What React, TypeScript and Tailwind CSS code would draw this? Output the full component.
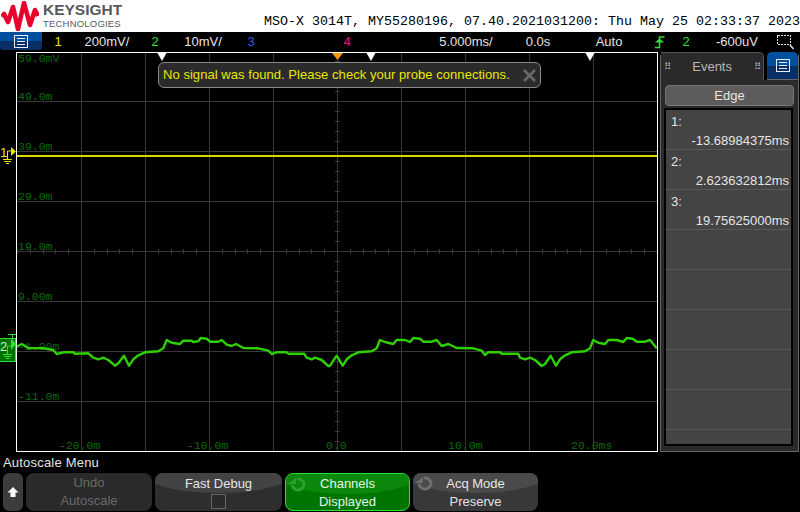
import React from "react";

const seg1: number[][] = [[50,80],[65,72],[85,84],[130,85],[160,90],[170,102],[190,97],[220,97],[225,101],[265,100],[280,113],[295,118],[310,113],[325,120],[345,137],[355,130],[372,107],[387,137],[400,118],[415,106],[435,97],[475,94],[490,85],[500,60],[515,68],[540,72],[550,62],[575,62],[580,66],[595,64],[602,54],[620,56],[630,65],[655,65],[665,60],[680,74],[695,78],[708,72],[730,84],[775,85],[805,92],[815,102],[830,97],[860,97],[865,101],[912,101],[920,113],[935,118],[945,113],[965,120],[985,138]];
const seg2: number[][] = [[0,137],[20,107],[38,137],[50,118],[65,106],[85,97],[125,94],[140,85],[150,60],[165,66],[190,72],[200,60],[225,60],[240,66],[250,54],[270,56],[280,65],[305,65],[320,60],[335,78],[355,72],[380,84],[430,85],[455,92],[465,105],[475,97],[510,97],[515,101],[565,101],[570,113],[585,118],[600,113],[615,120],[635,138],[645,132],[662,107],[678,137],[690,118],[705,106],[725,97],[765,94],[780,85],[790,60],[805,68],[825,72],[835,60],[860,60],[880,66],[890,54],[908,56],[920,65],[945,65],[960,60],[980,85]];
const trace = [
  ...seg1.map(([x, y]) => `${(x / 3).toFixed(1)},${(320 + y / 3).toFixed(1)}`),
  ...seg2.map(([x, y]) => `${(330 + x / 3).toFixed(1)},${(320 + y / 3).toFixed(1)}`),
].join(" ");

const vLines = [81, 145, 209, 273, 337, 401, 465, 529, 593];
const hLines = [101, 151, 201, 251, 301, 351, 401];
const vLabels: [string, number][] = [["59.0mV", 62], ["49.0m", 100], ["39.0m", 150], ["29.0m", 200], ["19.0m", 250], ["9.00m", 300], ["-1.00m", 350], ["-11.0m", 400]];
const hLabels: [string, number][] = [["-20.0m", 59], ["-10.0m", 187], ["0.0", 326], ["10.0m", 448], ["20.0ms", 571]];
const tri = [162, 371, 590];

function MenuIcon() {
  return (
    <svg width="14" height="13" viewBox="0 0 14 13" fill="none" stroke="#e8eef8" strokeWidth="1" shapeRendering="crispEdges">
      <rect x="0.5" y="0.5" width="13" height="12" />
      <path d="M3 3.5h8M3 6.5h8M3 9.5h8" />
    </svg>
  );
}

function Loop({ color }: { color: string }) {
  return (
    <svg className="absolute left-[2px] top-[3px]" width="19" height="15" viewBox="0 0 19 15" fill="none" stroke={color} strokeWidth="3">
      <path d="M9 2 A6 5.5 0 1 1 4 8" />
      <path d="M0 7 L8 7 L8 1 Z" fill={color} stroke="none" />
    </svg>
  );
}

function Scope() {
  return (
    <svg className="block" width="640" height="398" viewBox="17 53 640 398">
      <g stroke="#383838" strokeWidth="1" shapeRendering="crispEdges">
        {vLines.map((x) => <line key={x} x1={x + 0.5} x2={x + 0.5} y1="53" y2="451" />)}
        {hLines.map((y) => <line key={y} x1="17" x2="657" y1={y + 0.5} y2={y + 0.5} />)}
        {Array.from({ length: 40 }, (_, i) => (
          <line key={`v${i}`} x1="335" x2="340" y1={61 + i * 10 + 0.5} y2={61 + i * 10 + 0.5} />
        ))}
        {Array.from({ length: 50 }, (_, i) => (
          <line key={`h${i}`} x1={17 + i * 12.8 + 0.5} x2={17 + i * 12.8 + 0.5} y1="249" y2="254" />
        ))}
      </g>
      <g fill="#0b6b0b" className="font-['Liberation_Mono',monospace] text-[11.5px]">
        {vLabels.map(([t, y]) => <text key={t} x="18" y={y}>{t}</text>)}
        {hLabels.map(([t, x]) => <text key={t} x={x} y="449">{t}</text>)}
      </g>
      <rect x="17" y="155" width="640" height="2" fill="#d9d900" />
      <polyline points={trace} fill="none" stroke="#2fd000" strokeWidth="2.4" strokeLinejoin="round" />
      {tri.map((x) => <path key={x} d={`M${x - 4.5} 53h9l-4.5 8z`} fill="#ffffff" />)}
      <path d="M332 53h11l-5.5 7z" fill="#f59a10" />
    </svg>
  );
}

function Softkey({ className, top, children, w }: { className: string; top: string; children: React.ReactNode; w: string }) {
  return (
    <div className={`relative overflow-hidden rounded-lg h-[38px] ${w} ${className}`}>
      <div className={`absolute left-[-10%] right-[-10%] top-[-22px] h-[42px] rounded-[50%] ${top}`} />
      {children}
    </div>
  );
}

export default function App() {
  return (
    <div className="w-[800px] h-[512px] bg-black overflow-hidden flex flex-col font-['Liberation_Sans',Arial,sans-serif] text-[13px]">
      {/* Header */}
      <div className="h-8 bg-white flex items-start relative shrink-0">
        <svg className="mt-px ml-px shrink-0" width="38" height="30" viewBox="0 0 38 30" fill="none">
          <polyline points="1,16 3,13 7,21 12,6 17,28 23,2 29,24 34,9 37,15" stroke="#e8002d" strokeWidth="4.6" strokeLinejoin="round" />
        </svg>
        <div className="ml-[4px] flex flex-col">
          <span className="text-[15.5px] leading-[15px] mt-[2px] font-bold text-[#58595b] tracking-[0px]">KEYSIGHT</span>
          <span className="text-[9.5px] leading-[10px] mt-[2px] text-[#58595b] tracking-[0.2px]">TECHNOLOGIES</span>
        </div>
        <div className="ml-auto self-end pb-[2px] font-['Liberation_Mono',monospace] text-[13.33px] leading-[16px] text-black whitespace-pre">
          MSO-X 3014T, MY55280196, 07.40.2021031200: Thu May 25 02:33:37 2023
        </div>
      </div>

      {/* Status bar */}
      <div className="h-5 flex items-center shrink-0 text-[#e4e4e4] text-center leading-[18px]">
        <div className="w-[42px] h-[18px] self-start rounded-b-[3px] flex items-center justify-center bg-[linear-gradient(#00509f_0%,#00509f_50%,#0a2f66_50%,#0a2f66_100%)]">
          <MenuIcon />
        </div>
        <span className="ml-[6px] w-[20px] text-[#e6e600]">1</span>
        <span className="ml-[14px] w-[50px]">200mV/</span>
        <span className="ml-[13px] w-[20px] text-[#30e030]">2</span>
        <span className="ml-[13px] w-[50px]">10mV/</span>
        <span className="ml-[13px] w-[20px] text-[#3a5ae0]">3</span>
        <span className="ml-[76px] w-[20px] text-[#e8108c]">4</span>
        <span className="ml-[79px] w-[60px]">5.000ms/</span>
        <span className="ml-[22px] w-[40px]">0.0s</span>
        <span className="ml-[31px] w-[40px]">Auto</span>
        <svg className="ml-[24px]" width="14" height="14" viewBox="0 0 14 14" fill="none" stroke="#30e030" strokeWidth="1.5">
          <path d="M2 12.5h4.5V2h5" />
          <path d="M2 7.5h9L6.5 3.5z" fill="#30e030" stroke="none" />
        </svg>
        <span className="ml-[9px] w-[20px] text-[#30e030]">2</span>
        <span className="ml-[16px] w-[50px]">-600uV</span>
        <svg className="ml-[15px]" width="18" height="17" viewBox="0 0 18 17" fill="none" stroke="#e4e4e4" strokeWidth="1" strokeDasharray="2 1" shapeRendering="crispEdges">
          <rect x="0.5" y="1.5" width="13" height="9" />
          <path d="M13 11l3.5 4" strokeDasharray="0" strokeWidth="1.5" shapeRendering="auto" />
        </svg>
      </div>

      {/* Main */}
      <div className="h-[400px] flex shrink-0">
        <div className="w-4 relative shrink-0">
          <svg className="absolute left-0 top-[94px]" width="17" height="24" viewBox="0 148 17 24" fill="#e6e600">
            <text x="0" y="158.5" className="font-['Liberation_Sans',sans-serif] text-[13px]">1</text>
            <path d="M11 149l5 4.5-5 4.5z" />
            <path d="M7.5 161v-8h4" stroke="#e6e600" fill="none" />
            <path d="M3 161h9v1H3zM4 163h7v1H4zM6 165h3v1H6z" />
          </svg>
          <div className="absolute left-0 top-[286px] w-[16px] h-[24px] bg-[#007000] border-y border-r border-[#30e030]" />
          <svg className="absolute left-0 top-[282px]" width="17" height="30" viewBox="0 334 17 30">
            <path d="M8 334.5h8M12.5 334v4" stroke="#30e030" fill="none" />
            <text x="0" y="351" fill="#c8f8c8" className="font-['Liberation_Sans',sans-serif] text-[13px]">2</text>
            <path d="M11 338l5 6-5 6z" fill="#30e030" />
            <path d="M7.5 354v-8h4" stroke="#30e030" fill="none" />
            <path d="M3 354h9v1H3zM4 356h7v1H4zM6 358h3v1H6z" fill="#30e030" />
          </svg>
        </div>
        <div className="w-[642px] h-[400px] border border-white relative shrink-0">
          <Scope />
          <div className="absolute left-[141px] top-[9px] w-[383px] h-[26px] rounded-md bg-[#2b2b2b] border border-[#8a8a8a] flex items-center pl-[4px] pr-[4px] text-[#e8e800]">
            <span className="whitespace-nowrap tracking-[0.05px]">No signal was found. Please check your probe connections.</span>
            <svg className="ml-auto" width="13" height="13" viewBox="0 0 13 13" stroke="#6a6a6a" strokeWidth="2.6">
              <path d="M1 1l11 11M12 1L1 12" />
            </svg>
          </div>
        </div>
        <div className="ml-[2px] w-[139px] h-[400px] flex flex-col relative bg-[#2a2a2a] border-x border-b border-[#666] rounded-t-[5px]">
          <div className="h-7 flex shrink-0 bg-black">
            <div className="w-[104px] h-full bg-[#2a2a2a] border-t border-r border-[#555] rounded-tr-[5px] flex items-center justify-between px-[3px] text-[#b8b8b8]">
              <span className="tracking-[1px] text-[10px] leading-[6px] text-[#bbb] w-[6px] whitespace-pre-wrap">⠿</span>
              <span>Events</span>
              <span className="tracking-[1px] text-[10px] leading-[6px] text-[#bbb] w-[6px]">⠿</span>
            </div>
            <div className="ml-[3px] w-[31px] h-[28px] rounded-t-[5px] flex items-center justify-center border-b border-[#666] bg-[linear-gradient(#00509f_0%,#00509f_50%,#0a2f66_50%,#0a2f66_100%)]">
              <MenuIcon />
            </div>
          </div>
          <div className="mx-[4px] mt-[5px] h-[21px] w-[129px] shrink-0 rounded-[4px] bg-[#5c5c5c] border border-[#777] flex items-center justify-center text-[#e4e4e4]">Edge</div>
          <div className="ml-[3px] mt-[2px] w-[129px] h-[338px] shrink-0 border-x-2 border-y-2 border-black overflow-hidden bg-[#444444] text-[#e4e4e4]">
            {[["1:", "-13.68984375ms"], ["2:", "2.623632812ms"], ["3:", "19.75625000ms"], ["", ""], ["", ""], ["", ""], ["", ""], ["", ""], ["", ""]].map(([k, v], i) => (
              <div key={i} className="h-10 border-b border-[#575757] pl-[5px] pr-[2px] flex flex-col leading-[19px] pt-[2px]">
                <span className="h-[19px]">{k}</span>
                <span className="h-[19px] text-right">{v}</span>
              </div>
            ))}
          </div>
        </div>
      </div>

      {/* Softkey label */}
      <div className="h-[21px] pl-[3px] flex items-center text-[#e4e4e4] shrink-0 tracking-[0.2px]">Autoscale Menu</div>

      {/* Softkeys */}
      <div className="flex pl-[3px] gap-[3px] shrink-0 leading-[18px] text-center">
        <div className="w-[20px] h-[38px] rounded-md bg-[#3c3c3c] flex items-center justify-center">
          <svg width="12" height="12" viewBox="0 0 12 12" fill="#ffffff"><path d="M6 1l5.5 5.5H8.5V11h-5V6.5H.5z" /></svg>
        </div>
        <div className="w-[126px] h-[38px] rounded-lg bg-[#2a2a2a] text-[#6a6a6a] flex flex-col justify-center">
          <span>Undo</span>
          <span>Autoscale</span>
        </div>
        <Softkey w="w-[127px]" className="bg-[#2e2e2e] text-[#e4e4e4]" top="bg-[#434343]">
          <div className="relative flex flex-col items-center pt-[2px]">
            <span>Fast Debug</span>
            <span className="w-[15px] h-[15px] mt-[1px] bg-[#2b2b2b] border border-[#666]" />
          </div>
        </Softkey>
        <Softkey w="w-[125px]" className="bg-[#007400] border border-[#30e030] text-[#e8f4e8]" top="bg-[#0b870b]">
          <Loop color="#2f9f2f" />
          <div className="relative flex flex-col pt-px">
            <span>Channels</span>
            <span>Displayed</span>
          </div>
        </Softkey>
        <Softkey w="w-[125px]" className="bg-[#383838] text-[#e4e4e4]" top="bg-[#4a4a4a]">
          <Loop color="#6f6f6f" />
          <div className="relative flex flex-col pt-[2px]">
            <span>Acq Mode</span>
            <span>Preserve</span>
          </div>
        </Softkey>
      </div>
    </div>
  );
}
